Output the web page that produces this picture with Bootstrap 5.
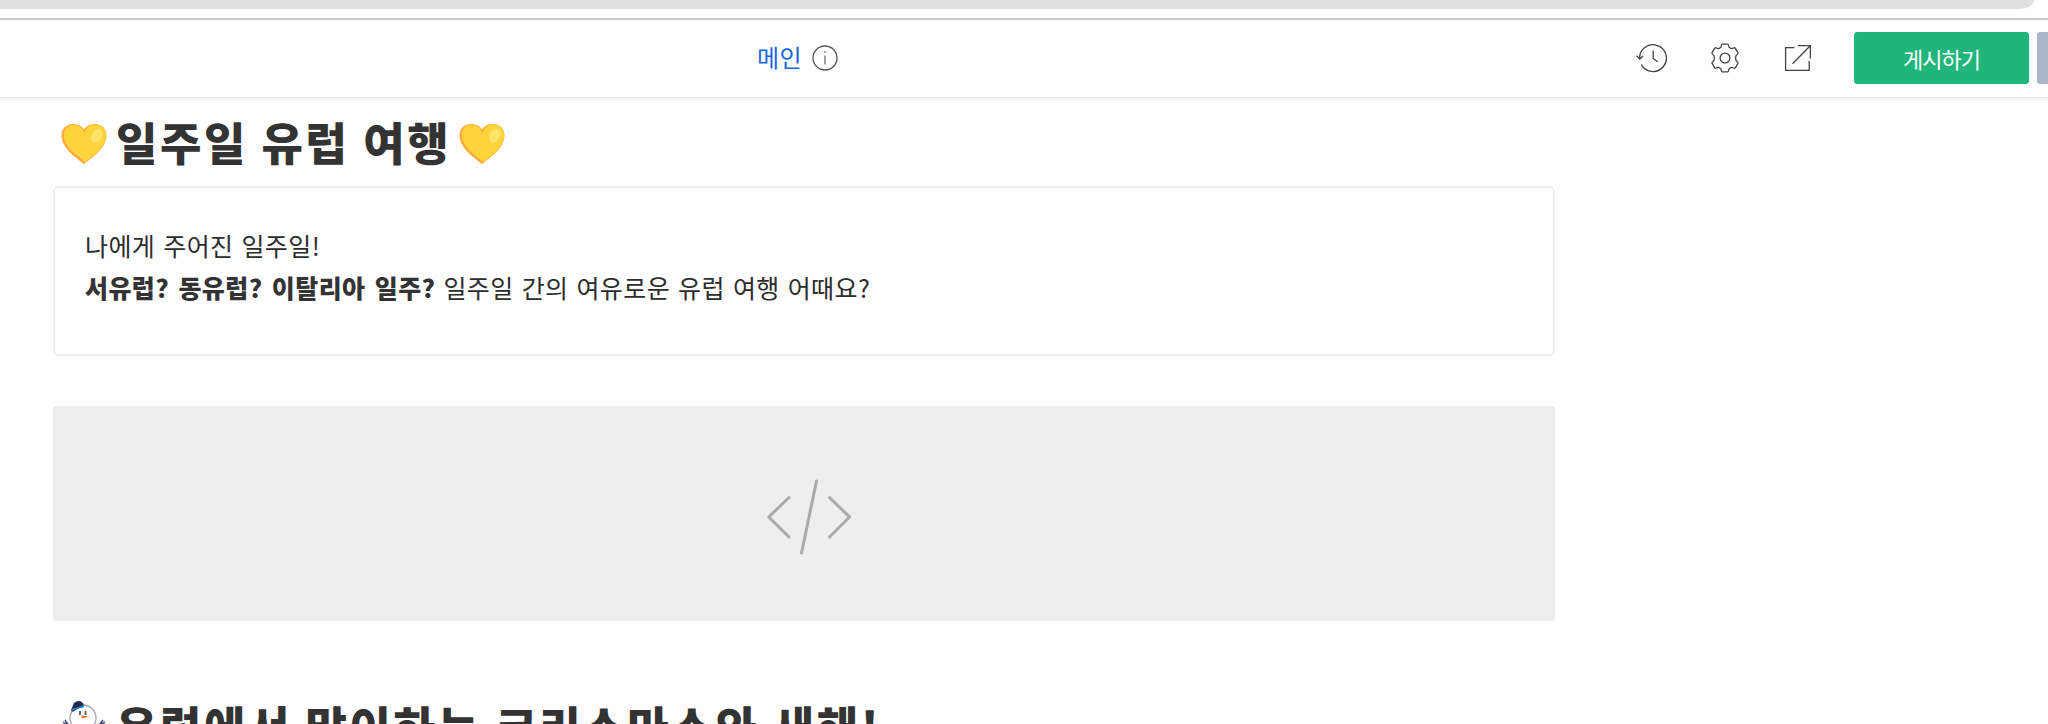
<!DOCTYPE html>
<html lang="ko">
<head>
<meta charset="utf-8">
<meta name="viewport" content="width=device-width, initial-scale=1">
<title>일주일 유럽 여행</title>
<link rel="stylesheet" href="https://cdn.jsdelivr.net/npm/bootstrap@5.3.0/dist/css/bootstrap.min.css">
<style>
  body { font-family: "Noto Sans CJK KR", "Noto Sans", sans-serif; color: #333; background: #fefefe; height: 724px; }
  svg { display: block; flex: none; }
  .frame-edge { height: 20px; border-bottom: 2px solid #cacaca; }
  .frame-bar { width: 2034px; height: 9px; background: #e0e0e0; border-bottom-right-radius: 22px 14px; }
  .editor-bar { height: 80px; padding: 0 0 2px 757px; border-bottom: 2px solid #f4f4f4; box-shadow: inset 0 -1px #e6e6e6; }
  .page-name { font-size: 24px; line-height: 36px; color: #1668e3; letter-spacing: .3px; margin-right: 10px; padding-bottom: 3px; }
  .tools { gap: 41.5px; margin-right: 40px; }
  .btn-publish { --bs-btn-color: #fff; --bs-btn-bg: #1fb57b; --bs-btn-border-color: #1fb57b; --bs-btn-hover-bg: #199c69; --bs-btn-hover-color: #fff;
    width: 175px; height: 52px; padding: 0; border-radius: 3px; font-size: 22px; letter-spacing: -1px; line-height: 44px; }
  .btn-side { width: 11px; height: 52px; background: #adb6c9; border-radius: 3px 0 0 3px; margin-left: 8px; }
  .page-body { width: 1502px; margin-left: 53px; }
  .post-title { font-size: 45px; font-weight: 900; line-height: 60px; height: 60px; letter-spacing: 2.6px; word-spacing: -1.6px; white-space: nowrap; }
  .post-title span { margin-left: 9px; }
  .first-title { margin-top: 14px; padding-left: 8px; }
  .first-title span { margin-right: 8px; position: relative; top: -2px; }
  .intro { height: 170px; margin-top: 12px; padding: 36px 30px; border: 2px solid #eee; border-radius: 6px; background: #fefefe; font-size: 25px; line-height: 42px; letter-spacing: .43px; word-spacing: .5px; color: #2d2d2d; white-space: nowrap; }
  .intro b { font-weight: 900; color: #333; word-spacing: 1.8px; }
  .code-box { height: 215px; margin-top: 50px; padding: 7px 0 0 9px; background: #eee; border-radius: 3px; }
  .next-title { margin-top: 75px; padding-left: 8px; }
</style>
</head>
<body class="overflow-hidden">
<div class="frame-edge"><div class="frame-bar"></div></div>

<header class="editor-bar d-flex align-items-center">
  <span class="page-name">메인</span>
  <svg width="26" height="26" viewBox="0 0 26 26" fill="none" stroke="#555" stroke-width="1.3"><circle cx="13" cy="13" r="12"/><path d="M13 10.5V19.5" stroke="#888" stroke-width="1.6"/><circle cx="13" cy="7" r=".9" fill="#777" stroke="none"/></svg>
  <div class="tools d-flex align-items-center ms-auto">
    <svg width="32" height="32" viewBox="0 0 32 32" fill="none" stroke="#444" stroke-width="1.3"><path d="M4.7 17.5A13.4 13.4 0 1 1 6.3 22.6M1.5 13.6L4.8 17L8 14M18.2 8.5V16.5L22.8 19.8"/></svg>
    <svg width="32" height="32" viewBox="0 0 32 32" fill="none" stroke="#444" stroke-width="1.3" stroke-linejoin="round"><circle cx="16" cy="16" r="4.9"/><path d="M13.500 2.200H18.500Q19.500 2.200 19.600 3.500C19.800 6 22.300 7.300 24.500 6Q25.700 5.300 26.400 6.300L28.900 10.600Q29.400 11.600 28.300 12.300C26 13.800 26 18.200 28.300 19.700Q29.400 20.400 28.900 21.400L26.400 25.700Q25.700 26.700 24.500 26C22.300 24.700 19.800 26 19.600 28.500Q19.500 29.800 18.500 29.800H13.500Q12.500 29.800 12.400 28.500C12.200 26 9.700 24.700 7.500 26Q6.300 26.700 5.600 25.700L3.100 21.400Q2.600 20.400 3.700 19.700C6 18.200 6 13.800 3.700 12.300Q2.600 11.600 3.100 10.600L5.600 6.300Q6.300 5.300 7.500 6C9.700 7.300 12.200 6 12.400 3.500Q12.500 2.200 13.500 2.200Z"/></svg>
    <svg width="32" height="32" viewBox="0 0 32 32" fill="none" stroke="#444" stroke-width="1.3"><path d="M12.5 5.6H3.6V28.4H27.2V19M15.8 3.6H28.4V16.5M28 4L10.5 21.8"/></svg>
  </div>
  <button type="button" class="btn btn-publish">게시하기</button>
  <div class="btn-side"></div>
</header>

<main class="page-body">
  <h1 class="post-title first-title mb-0 d-flex align-items-center">
    <svg width="46" height="42" viewBox="0 0 46 42"><use href="#heart"/></svg>
    <span>일주일 유럽 여행</span>
    <svg width="46" height="42" viewBox="0 0 46 42"><defs><g id="heart"><path d="M23 41C14 34 .5 25 .5 12C.5 5 6 1 12 1C17 1 21 3 23 7C25 3 29 1 34 1C41 1 45.500 6 45.500 12C45.500 25 32 34 23 41Z" fill="#ffab40"/><path d="M24.500 39C16 32 3 24 3 12.500C3 6 7 2 13 2C18 2 21 4.500 23 9C25 4 29 1.500 34 1.500C41 1.500 45 6 45 12C45 24 32 33 24.500 39Z" fill="#fdd43a"/><path d="M23 9C23 5 20 2.500 16 1.700C20 2 22 4 23 7C24.500 4 26 3 28 2.500C25 5 24.500 8 23 12Z" fill="#ffb13b"/><path d="M30 15C30 10 34 6 38 6C43 7 42 13 39 17C36 21 31 21 30 15Z" fill="#ffe36b"/></g></defs><use href="#heart"/></svg>
  </h1>

  <section class="intro">
    <p class="mb-0">나에게 주어진 일주일!</p>
    <p class="mb-0"><b>서유럽? 동유럽? 이탈리아 일주?</b> 일주일 간의 여유로운 유럽 여행 어때요?</p>
  </section>

  <div class="code-box d-flex align-items-center justify-content-center">
    <svg width="84" height="76" viewBox="0 0 84 76" fill="none" stroke="#aaa" stroke-width="3" stroke-linecap="round" stroke-linejoin="miter"><path d="M22 18.500L1.800 38L22 58M49.500 2L34.500 74M62.500 18.500L82.500 38L62.500 58"/></svg>
  </div>

  <h2 class="post-title next-title mb-0 d-flex">
    <svg class="mt-1" width="46" height="46" viewBox="0 0 46 46"><path d="M4 20L10 29M2 22L8 26M42 20L35 29M44 22L37 26" stroke="#454b78" stroke-width="1.500"/><circle cx="22" cy="18" r="13" fill="#fff" stroke="#a9a3b5" stroke-width="1.300"/><path d="M10 10L13 3Q18-1 22 3L23 7Q16 8 12 12Z" fill="#20264f"/><path d="M11 8.500Q17 8 23 4.500L23 7Q16 8 11 11Z" fill="#1f80c8"/><path d="M19 11V15M24.500 11V15" stroke="#555779" stroke-width="1.800"/><path d="M20 15.500L29 16.500L21 18.500Z" fill="#ff7a28"/></svg>
    <span>유럽에서 맞이하는 크리스마스와 새해!</span>
  </h2>
</main>
<script src="https://cdn.jsdelivr.net/npm/bootstrap@5.3.0/dist/js/bootstrap.bundle.min.js"></script>
</body>
</html>
